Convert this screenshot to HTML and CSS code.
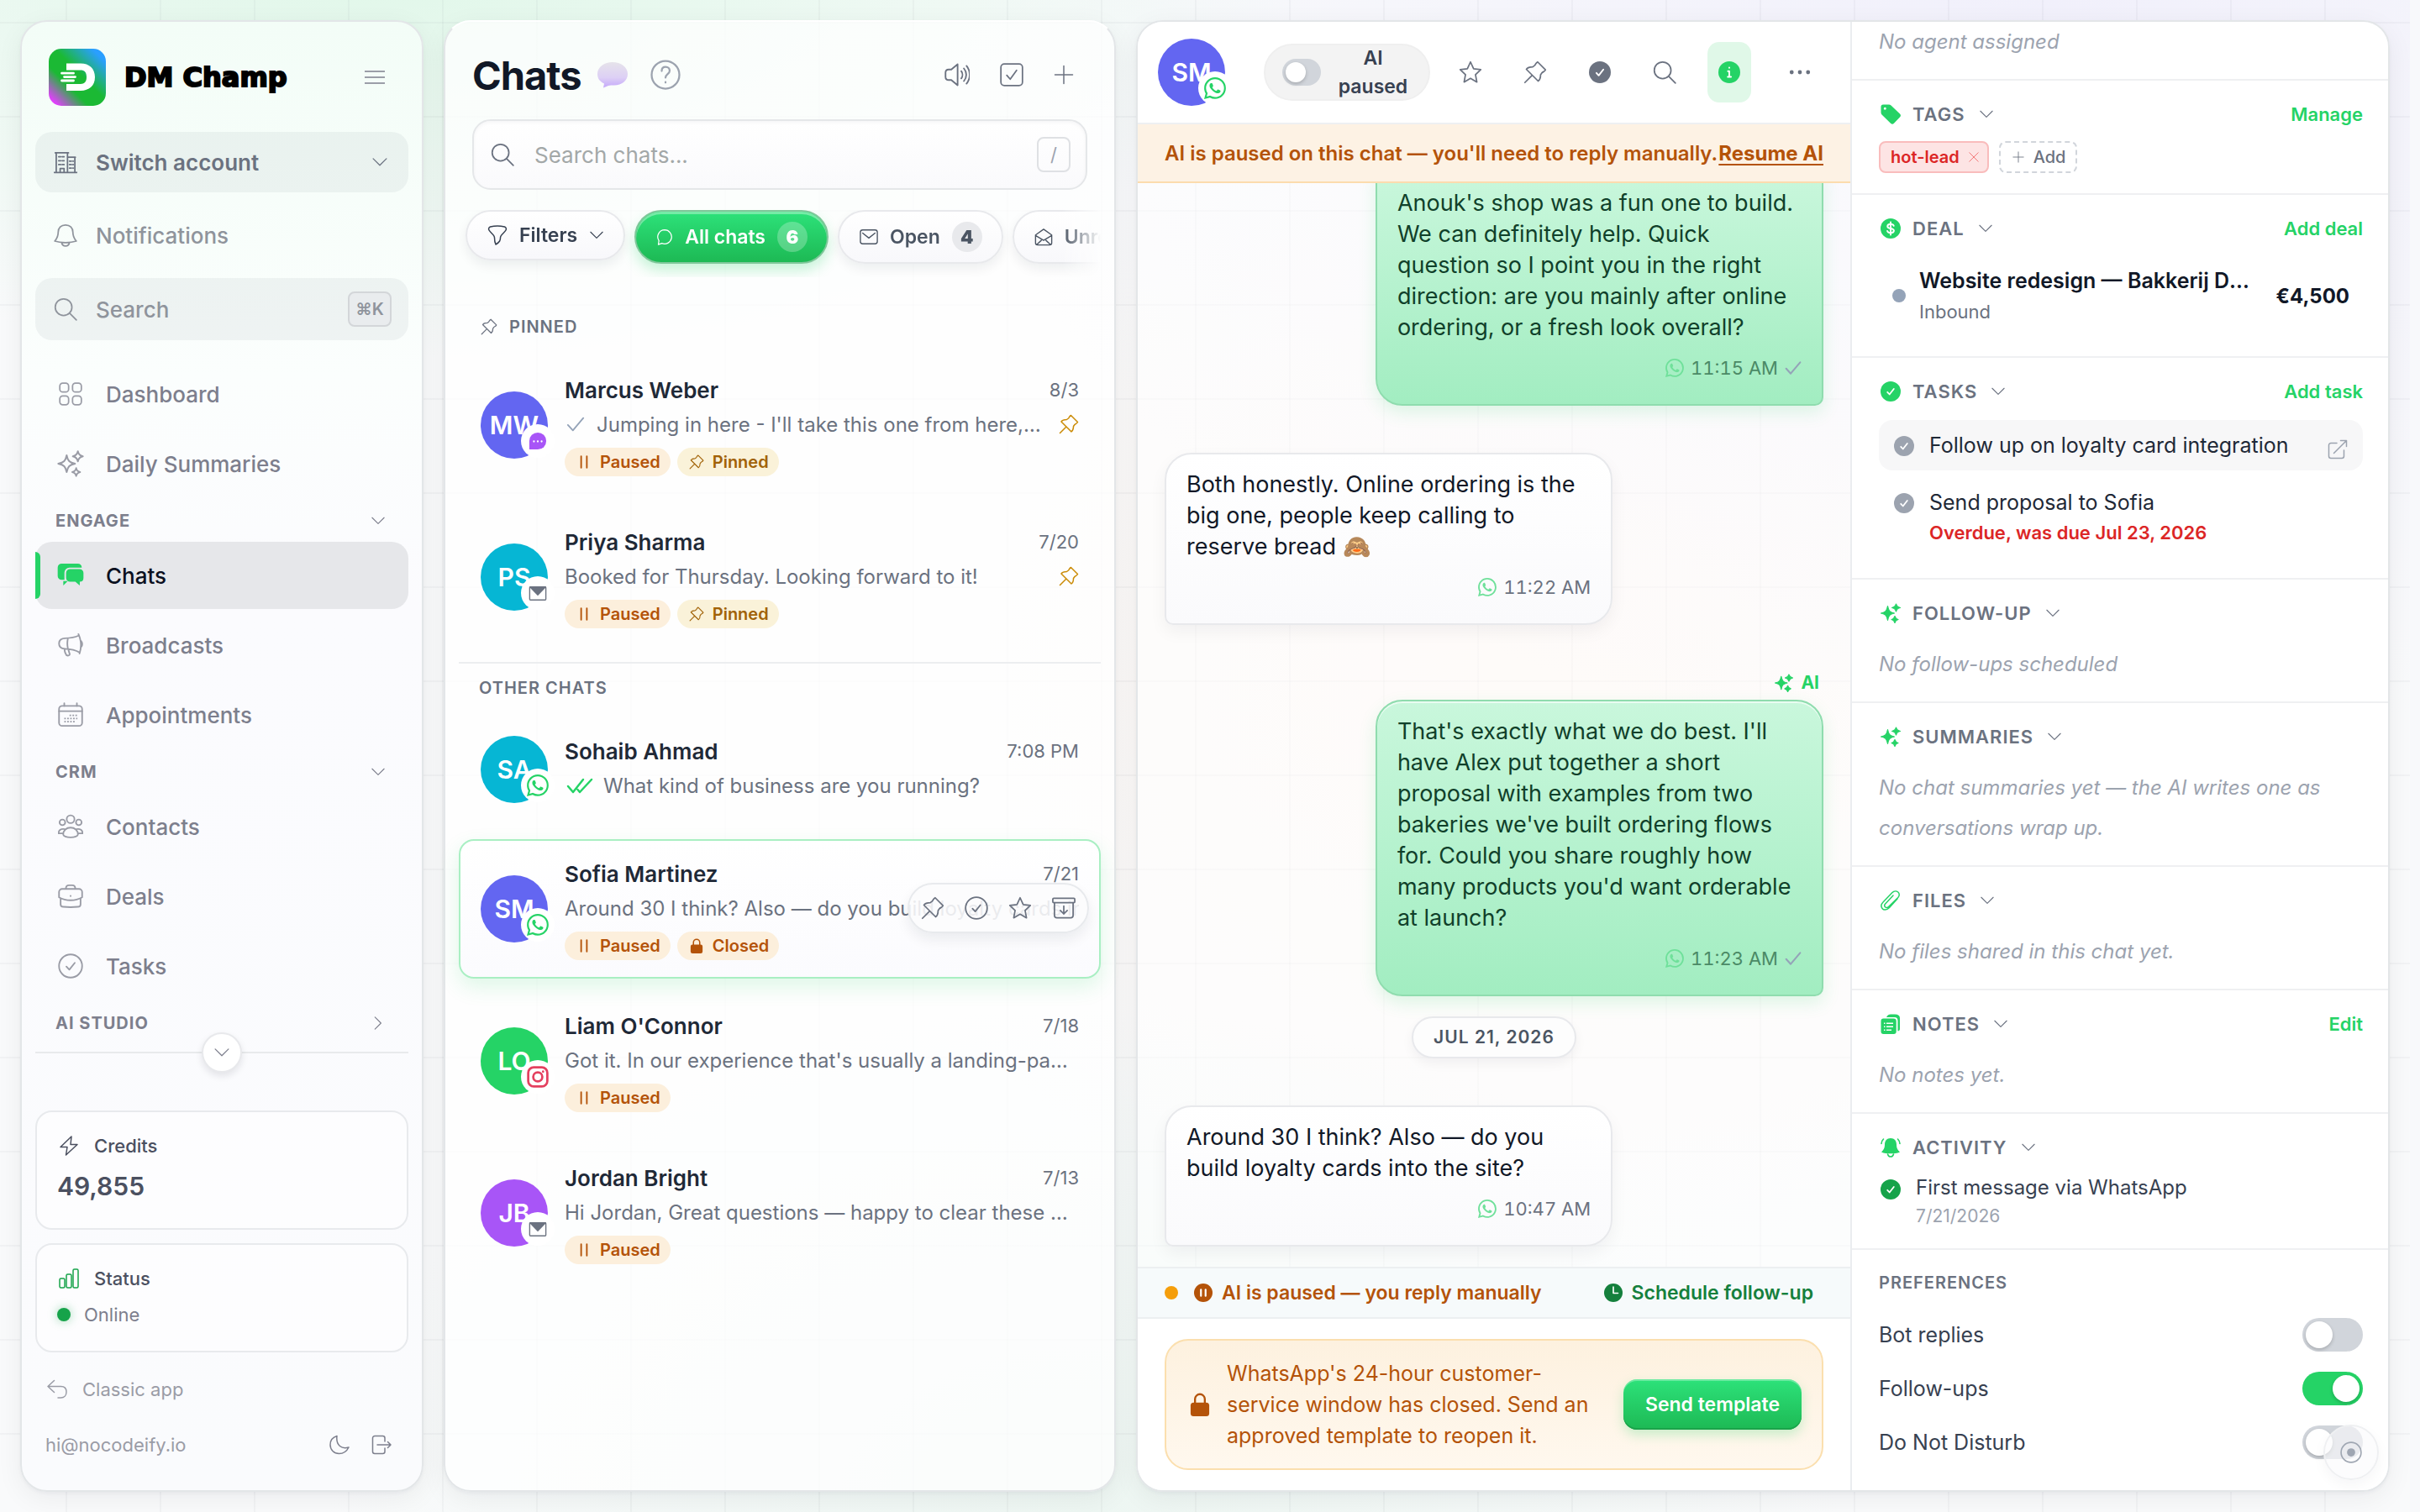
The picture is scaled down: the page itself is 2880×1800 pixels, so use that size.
FILE: index.html
```html
<!DOCTYPE html>
<html lang="en">
<head>
    <meta charset="UTF-8">
    <meta name="viewport" content="width=device-width, initial-scale=1.0">
    <title>Chats - DM Champ</title>
    <link rel="stylesheet" href="styles.css">
</head>
<body>
    <!-- Icon sprite -->
    <svg class="sprite" xmlns="http://www.w3.org/2000/svg">
        <symbol id="i-menu" viewBox="0 0 24 24"><path d="M0 5h24M0 12h24M0 19h24"/></symbol>
        <symbol id="i-down" viewBox="0 0 24 24"><path d="M2.500 7l9.500 9.500L21.500 7"/></symbol>
        <symbol id="i-right" viewBox="0 0 24 24"><path d="M7 2.500l9.500 9.500L7 21.500"/></symbol>
        <symbol id="i-building" viewBox="0 0 24 24"><path d="M.5 22.500h23M2.500 22V2.500M14 22V2.500M1.500 2.500h13.500M14 7h8M21.500 7v15M6.500 22v-3.500h4V22"/><path stroke-dasharray="2 1.500" d="M5 6.500h7M5 10.500h7M5 14.500h7M16 11h4M16 14.500h4M16 18h4"/></symbol>
        <symbol id="i-bell" viewBox="0 0 24 24"><path d="M12 1.500c-4.500 0-7.500 3-7.500 7.500 0 5-1.500 6.500-3.500 9 3.500 1.200 7 1.500 11 1.500s7.500-.3 11-1.500c-2-2.500-3.500-4-3.500-9 0-4.500-3-7.500-7.500-7.500zM8 19.500c.3 2 1.800 3.500 4 3.500s3.700-1.500 4-3.500"/></symbol>
        <symbol id="i-search" viewBox="0 0 24 24"><circle cx="10" cy="10" r="8.500"/><path d="M16.200 16.200L23 23"/></symbol>
        <symbol id="i-grid" viewBox="0 0 24 24"><rect x="1" y="1" width="9" height="9" rx="3"/><rect x="14" y="1" width="9" height="9" rx="3"/><rect x="1" y="14" width="9" height="9" rx="3"/><rect x="14" y="14" width="9" height="9" rx="3"/></symbol>
        <symbol id="i-stars" viewBox="0 0 24 24"><path d="M8.500 4.500c1 5 2.500 6.500 7.500 7.500-5 1-6.500 2.500-7.500 7.500-1-5-2.500-6.500-7.500-7.500 5-1 6.500-2.500 7.500-7.500zM18.500 1c.6 2.800 1.600 3.900 4.500 4.500-2.900.6-3.900 1.600-4.500 4.500-.6-2.900-1.600-3.900-4.500-4.500 2.900-.6 3.900-1.700 4.500-4.500zM17 16c.4 2.200 1.300 3 3.500 3.500-2.200.5-3.100 1.300-3.500 3.500-.4-2.200-1.300-3-3.500-3.500 2.200-.5 3.100-1.300 3.500-3.500z"/></symbol>
        <symbol id="i-stars-f" viewBox="0 0 24 24"><path stroke="currentColor" stroke-width="1.200" stroke-linejoin="round" d="M8.500 3.500c1.200 6 2.500 7.300 8 8.500-5.500 1.200-6.800 2.500-8 8.500-1.200-6-2.500-7.300-8-8.500 5.500-1.200 6.800-2.500 8-8.500zM18.500 1c.8 3 1.800 3.900 5 4.500-3.200.6-4.200 1.600-5 4.500-.8-2.900-1.800-3.900-5-4.500 3.200-.6 4.200-1.500 5-4.500zM17 15.500c.6 2.600 1.500 3.400 4 4-2.500.6-3.400 1.400-4 4-.6-2.600-1.500-3.400-4-4 2.500-.6 3.400-1.400 4-4z"/></symbol>
        <symbol id="i-chats" viewBox="0 0 24 24"><path d="M4 1.500h14.500a3.500 3.500 0 0 1 3.500 3.500H11a4.500 4.500 0 0 0-4.500 4.500v6.500H4a3.500 3.500 0 0 1-3.500-3.500V5A3.500 3.500 0 0 1 4 1.500zM5.500 17h4l-4 4z"/><path d="M11.500 6.300H20a3.500 3.500 0 0 1 3.500 3.500v4.400a3.500 3.500 0 0 1-3.300 3.500V21l-4-3.300h-4.700a3.500 3.500 0 0 1-3.500-3.500V9.800a3.500 3.500 0 0 1 3.500-3.500z"/></symbol>
        <symbol id="i-horn" viewBox="0 0 24 24"><path d="M19.500 3C16 4.700 12 5.300 6.500 5.500 3 5.700 1 7.700 1 10.500s2 4.800 5.500 5c5.500.2 10 1 14 3.500M19.500 1.500c2.500 5.500 3 12.500 1 18.500M22 8c1.300 1.500 1.500 4 .3 5.500M9.500 5.500c-.7 3-.7 7 0 10M6 15.500c.3 2.500.8 4.500 2 6 1.200.8 3 .5 3.200-.8L9.800 16"/></symbol>
        <symbol id="i-calendar" viewBox="0 0 24 24"><rect x="1" y="3.500" width="22" height="19" rx="3"/><path d="M1 8.500h22M6 1v2.500M18 1v2.500"/><path stroke-linecap="butt" stroke-dasharray="1.500 1.300" d="M11 12.500h7.500M6 15.500h12.500M6 18.500h10"/></symbol>
        <symbol id="i-people" viewBox="0 0 24 24"><circle cx="12" cy="5" r="3.700"/><circle cx="4.200" cy="8" r="2.700"/><circle cx="19.800" cy="8" r="2.700"/><path d="M5 19.500c0-4 3-6.500 7-6.500s7 2.500 7 6.500c0 1.500-3 2.800-7 2.800s-7-1.300-7-2.800zM6.500 14.500c-3.500-.8-6 1-6 4h4.500M17.500 14.500c3.500-.8 6 1 6 4H19"/></symbol>
        <symbol id="i-case" viewBox="0 0 24 24"><path d="M4 5h16a3 3 0 0 1 3 3v5c-3.500 2-7 2.800-11 2.800S4.500 15 1 13V8a3 3 0 0 1 3-3zM7.500 5c0-2 1-3.500 3-3.500h3c2 0 3 1.500 3 3.500M2.500 14v5.500c0 1.500 1 2.500 2.500 2.500 4.500.5 9.500.5 14 0 1.500 0 2.500-1 2.500-2.500V14M12 11.500v.3"/></symbol>
        <symbol id="i-check-o" viewBox="0 0 24 24"><circle cx="12" cy="12" r="11"/><path d="M8 12.500l2.800 3L16 9"/></symbol>
        <symbol id="i-bolt" viewBox="0 0 24 24"><path d="M15 1L2 13.500h8L8.500 23 22 10.500h-8z"/></symbol>
        <symbol id="i-bars" viewBox="0 0 24 24"><rect x="1" y="12" width="6" height="11" rx="1.500"/><rect x="9" y="7" width="6" height="16" rx="1.500"/><rect x="17" y="1" width="6" height="22" rx="1.500"/></symbol>
        <symbol id="i-undo" viewBox="0 0 24 24"><path d="M8.500 1.500L1 8.500l7.500 7M1 8.500h15.500c4 0 6.500 2.500 6.500 6.500s-2.500 7-6.500 7H13"/></symbol>
        <symbol id="i-moon" viewBox="0 0 24 24"><path d="M9 1.500C4 3 1 7 1 12c0 6 4.500 10.500 10.500 10.500 5 0 9-2.500 11.500-7.500C15 17.500 7.500 13 9 1.500z"/></symbol>
        <symbol id="i-logout" viewBox="0 0 24 24"><path d="M16 8V4a2.500 2.500 0 0 0-2.500-2.500H4A2.500 2.500 0 0 0 1.500 4v16A2.500 2.500 0 0 0 4 22.500h9.500A2.500 2.500 0 0 0 16 20v-4M7 12h16M19.500 8.500L23 12l-3.500 3.500"/></symbol>
        <symbol id="i-help" viewBox="0 0 24 24"><circle cx="12" cy="12" r="11"/><path d="M9 9c0-2 1.300-3.200 3.100-3.200S15.300 7 15.300 8.800c0 2.500-3.300 2.700-3.300 5.500M12 17.800v.4"/></symbol>
        <symbol id="i-volume" viewBox="0 0 24 24"><path d="M12.500 2L6.500 7H4C2 7 1 8.500 1 10v4c0 1.500 1 3 3 3h2.500l6 5zM16 8.500c1.500 2 1.500 5 0 7M18.500 6c3 3.500 3 8.500 0 12M21 3.500c4 5 4 12 0 17"/></symbol>
        <symbol id="i-checkbox" viewBox="0 0 24 24"><rect x="1" y="1" width="22" height="22" rx="3.500"/><path d="M7 12.500l3.500 4L17 7.500"/></symbol>
        <symbol id="i-plus" viewBox="0 0 24 24"><path d="M12 1.500v21M1.500 12h21"/></symbol>
        <symbol id="i-x" viewBox="0 0 24 24"><path d="M3 3l18 18M21 3L3 21"/></symbol>
        <symbol id="i-funnel" viewBox="0 0 24 24"><path d="M3.500 2C8 1 16 1 20.500 2c1.500.5 2.500 2 1.500 4-1.500 3-6.500 5.500-6.500 9 0 3-.5 5-5.500 8-1-2-1.500-4-1.500-8 0-3.500-5-6-6.500-9-1-2 0-3.500 1.500-4z"/></symbol>
        <symbol id="i-bubble" viewBox="0 0 24 24"><path d="M12 2a10 10 0 1 1-4 19.200L3 23l.8-5.500A10 10 0 0 1 12 2z"/></symbol>
        <symbol id="i-mail" viewBox="0 0 24 24"><rect x="1" y="3" width="22" height="18" rx="3"/><path d="M4 7l8 6.500L20 7"/></symbol>
        <symbol id="i-mail-open" viewBox="0 0 24 24"><path d="M1.500 9.500L12 2l10.500 7.500V20a2.500 2.500 0 0 1-2.500 2.500H4A2.500 2.500 0 0 1 1.500 20zM2 10.500l10 6 10-6M3 22l6-5.500M21 22l-6-5.500"/></symbol>
        <symbol id="i-mail-fill" viewBox="0 0 24 24"><rect x="1.500" y="4" width="21" height="17" rx="1"/><path fill="currentColor" d="M2 4h20L12 14.500z"/></symbol>
        <symbol id="i-pin" viewBox="0 0 24 24"><path d="M14.500 1.500L22.500 9.500c-1 2-2.500 2-3.500 3l-1.500 2c0 3-1 5.500-2.500 6.500L3 9c1-1.500 3.500-2.500 6.500-2.500l2-1.500c1-1 1-2.500 3-3.500zM8.500 15.500L1.500 22.500"/></symbol>
        <symbol id="i-star" viewBox="0 0 24 24"><path d="M12 1.500l3.200 7 7.300.9-5.400 5.100 1.400 7.500-6.500-3.700L5.500 22l1.400-7.500L1.500 9.400l7.300-.9z"/></symbol>
        <symbol id="i-archive" viewBox="0 0 24 24"><rect x=".8" y="2" width="22.400" height="4.500" rx="1"/><path d="M2.500 6.500v13A2.500 2.500 0 0 0 5 22h14a2.500 2.500 0 0 0 2.500-2.500v-13M12 10v8M8.500 14.500L12 18l3.500-3.500"/></symbol>
        <symbol id="i-tick" viewBox="0 0 24 24"><path d="M2 13l6.500 7L22 4"/></symbol>
        <symbol id="i-ticks" viewBox="0 0 32 24"><path d="M2 13l6 7L20 5M13.500 17l2.500 3L30 5"/></symbol>
        <symbol id="i-pause" viewBox="0 0 24 24"><path d="M7.500 3v18M16.500 3v18"/></symbol>
        <symbol id="i-lock" viewBox="0 0 24 24"><path fill="none" stroke="currentColor" stroke-width="2" d="M7 11V6.500a5 5 0 0 1 10 0V11"/><rect x="2.500" y="10" width="19" height="14" rx="3"/></symbol>
        <symbol id="i-dots" viewBox="0 0 24 24"><circle cx="3" cy="12" r="2.200"/><circle cx="12" cy="12" r="2.200"/><circle cx="21" cy="12" r="2.200"/></symbol>
        <symbol id="i-check-f" viewBox="0 0 24 24"><circle cx="12" cy="12" r="12"/><path fill="none" stroke="#fff" stroke-width="1.800" stroke-linecap="round" d="M8.200 12.800l2.500 2.700L15.800 9"/></symbol>
        <symbol id="i-info" viewBox="0 0 24 24"><circle cx="12" cy="12" r="12"/><path fill="none" stroke="#fff" stroke-width="1.800" stroke-linecap="round" d="M12 6.800v.4M10.500 10.800H12v6M10.300 17h3.600"/></symbol>
        <symbol id="i-pause-f" viewBox="0 0 24 24"><circle cx="12" cy="12" r="12"/><path stroke="#fff" stroke-width="2.400" stroke-linecap="round" d="M9 8v8M15 8v8"/></symbol>
        <symbol id="i-clock-f" viewBox="0 0 24 24"><circle cx="12" cy="12" r="12"/><path fill="none" stroke="#fff" stroke-width="1.800" d="M12 4.500V12.500h6"/></symbol>
        <symbol id="i-dollar" viewBox="0 0 24 24"><circle cx="12" cy="12" r="12"/><path fill="none" stroke="#fff" stroke-width="2" stroke-linecap="round" d="M12 4.500v15M15.700 8.800c-.5-1.300-1.800-2-3.700-2-2.200 0-3.700 1-3.700 2.600 0 3.500 7.600 1.700 7.600 5.200 0 1.600-1.600 2.600-3.900 2.600-2 0-3.400-.8-3.900-2.200"/></symbol>
        <symbol id="i-tag" viewBox="0 0 24 24"><path fill-rule="evenodd" d="M3 .5h7c1 0 1.800.3 2.500 1L23 11.500c1.300 1.300 1.300 2.700 0 4L16 22.800c-1.200 1.200-2.700 1.200-4 0L1.500 12.500c-.7-.7-1-1.500-1-2.500V3C.5 1.500 1.500.5 3 .5zM5.200 3.800a1.500 1.500 0 1 0 .1 3 1.500 1.500 0 0 0-.1-3z"/></symbol>
        <symbol id="i-external" viewBox="0 0 24 24"><path d="M11 4.500H4A2.500 2.500 0 0 0 1.500 7v13A2.500 2.500 0 0 0 4 22.500h13a2.500 2.500 0 0 0 2.500-2.500v-7M7.500 16.500L22.500 1.500M15.500 1.500h7v7"/></symbol>
        <symbol id="i-clip" viewBox="0 0 24 24"><path d="M20 10L10.500 20.500C7 24 3.500 23.500 2 21.500s-1.500-5 1-7.500L14 2.500c2-2 5-2 6.800-.5s2 4.500 0 6.500L9.500 19.500c-1.500 1.300-3 1.200-4 .2s-1-2.500.2-3.800L15 6"/></symbol>
        <symbol id="i-notes" viewBox="0 0 24 24"><path d="M7 4C8 1.500 10 .5 12 .5h5C21 .5 23 2 23 5v13c0 1.500-1 2.500-2.500 2.500V8A4 4 0 0 0 16.500 4z"/><path fill-rule="evenodd" d="M3.500 5.500h12.200A3 3 0 0 1 18.700 8.500V21a3 3 0 0 1-3 3H3.500a3 3 0 0 1-3-3V8.500a3 3 0 0 1 3-3zM4 10.500V12h1.500v-1.500zm3 0V12h8v-1.500zM4 14.500V16h1.500v-1.500zm3 0V16h8v-1.500zM4 18.500V20h1.500v-1.500zm3 0V20h6v-1.500z"/></symbol>
        <symbol id="i-bell-f" viewBox="0 0 24 24"><path d="M12 1C7.500 1 5 4 5 8.500c0 4.500-1.500 6.500-4 9C4 19 8 19.300 12 19.300S20 19 23 17.500c-2.500-2.500-4-4.500-4-9C19 4 16.500 1 12 1z"/><path fill="none" stroke="currentColor" stroke-width="1.600" stroke-linecap="round" d="M8.500 20c.5 2 1.700 3 3.500 3s3-1 3.500-3M3.500 2C2 3.500 1 5.500 1 7.500M20.500 2C22 3.500 23 5.500 23 7.500"/></symbol>
        <symbol id="i-messenger" viewBox="0 0 24 24"><path d="M12 1a11 11 0 0 1 0 22H1V12A11 11 0 0 1 12 1z"/><path fill="none" stroke="#fff" stroke-width="2.500" stroke-linecap="round" d="M7 12.500v.1M12 12.500v.1M17 12.500v.1"/></symbol>
        <symbol id="i-instagram" viewBox="0 0 24 24"><rect x="1.500" y="1.500" width="21" height="21" rx="6"/><circle cx="12" cy="12" r="5"/><path d="M17.800 6.200v.1"/></symbol>
        <symbol id="i-whatsapp" viewBox="0 0 16 16"><path d="M13.601 2.326A7.850 7.850 0 0 0 7.994 0C3.627 0 .068 3.558.064 7.926c0 1.399.366 2.760 1.057 3.965L0 16l4.204-1.102a7.900 7.900 0 0 0 3.790.965h.004c4.368 0 7.926-3.558 7.930-7.930A7.900 7.900 0 0 0 13.600 2.326zM7.994 14.521a6.600 6.600 0 0 1-3.356-.92l-.24-.144-2.494.654.666-2.433-.156-.251a6.560 6.560 0 0 1-1.007-3.505c0-3.626 2.957-6.584 6.591-6.584a6.560 6.560 0 0 1 4.660 1.931 6.560 6.560 0 0 1 1.928 4.660c-.004 3.639-2.961 6.592-6.592 6.592m3.615-4.934c-.197-.099-1.170-.578-1.353-.646-.182-.065-.315-.099-.445.099-.133.197-.513.646-.627.775-.114.133-.232.148-.43.050-.197-.1-.836-.308-1.592-.985-.59-.525-.985-1.175-1.103-1.372-.114-.198-.011-.304.088-.403.087-.088.197-.232.296-.346.1-.114.133-.198.198-.33.065-.134.034-.248-.015-.347-.05-.099-.445-1.076-.612-1.470-.16-.389-.323-.335-.445-.34-.114-.007-.247-.007-.38-.007a.73.73 0 0 0-.529.247c-.182.198-.691.677-.691 1.654s.71 1.916.81 2.049c.098.133 1.394 2.132 3.383 2.992.47.205.84.326 1.129.418.475.152.904.129 1.246.080.38-.058 1.171-.48 1.338-.943.164-.464.164-.86.114-.943-.049-.084-.182-.133-.38-.232"/></symbol>
        <symbol id="i-record" viewBox="0 0 24 24"><circle cx="12" cy="12" r="11"/><circle cx="12" cy="12" r="4.500" fill="currentColor" stroke="none"/></symbol>
    </svg>

    <div class="app">
        <!-- Sidebar -->
        <aside class="sidebar">
            <div class="brand">
                <svg class="brand-mark" viewBox="0 0 68 68">
                    <defs>
                        <linearGradient id="brandFill" x1="0" y1="1" x2="1" y2="0">
                            <stop offset="0.080" stop-color="#e040fb"/>
                            <stop offset="0.350" stop-color="#1bb934"/>
                            <stop offset="0.550" stop-color="#1bb934"/>
                            <stop offset="0.880" stop-color="#2a9fff"/>
                        </linearGradient>
                    </defs>
                    <rect width="68" height="68" rx="15" fill="url(#brandFill)"/>
                    <path fill="#fff" d="M21 17.500h17c10 0 17 6 17 16.300S48 50 38 50H21v-8h17c4.500 0 7-2.500 7-8.200s-2.500-8.200-7-8.200H21z"/>
                    <path stroke="#fff" stroke-width="2.800" stroke-linecap="round" d="M15.500 29.200h14M18.500 33.600h13M15.500 38h14"/>
                </svg>
                <span class="brand-name">DM Champ</span>
                <button class="icon-btn" aria-label="Toggle menu"><svg class="icon"><use href="#i-menu"/></svg></button>
            </div>
            <button class="side-box side-switch"><svg class="icon icon-28"><use href="#i-building"/></svg><span>Switch account</span><svg class="icon icon-20"><use href="#i-down"/></svg></button>
            <button class="side-box side-plain"><svg class="icon icon-28"><use href="#i-bell"/></svg><span>Notifications</span></button>
            <button class="side-box side-search"><svg class="icon icon-28"><use href="#i-search"/></svg><span>Search</span><kbd>⌘K</kbd></button>

            <nav class="nav">
                <a href="#"><svg class="icon icon-28"><use href="#i-grid"/></svg>Dashboard</a>
                <a href="#"><svg class="icon icon-32"><use href="#i-stars"/></svg>Daily Summaries</a>
                <button class="nav-group">ENGAGE<svg class="icon icon-18"><use href="#i-down"/></svg></button>
                <a href="#" class="active"><svg class="icon icon-32 solid"><use href="#i-chats"/></svg>Chats</a>
                <a href="#"><svg class="icon icon-30"><use href="#i-horn"/></svg>Broadcasts</a>
                <a href="#"><svg class="icon icon-30"><use href="#i-calendar"/></svg>Appointments</a>
                <button class="nav-group">CRM<svg class="icon icon-18"><use href="#i-down"/></svg></button>
                <a href="#"><svg class="icon icon-30"><use href="#i-people"/></svg>Contacts</a>
                <a href="#"><svg class="icon icon-30"><use href="#i-case"/></svg>Deals</a>
                <a href="#"><svg class="icon icon-30"><use href="#i-check-o"/></svg>Tasks</a>
                <button class="nav-group">AI STUDIO<svg class="icon icon-18"><use href="#i-right"/></svg></button>
            </nav>
            <div class="nav-more"><button aria-label="Show more"><svg class="icon icon-20"><use href="#i-down"/></svg></button></div>

            <div class="side-bottom">
                <div class="card credits">
                    <div class="card-title"><svg class="icon"><use href="#i-bolt"/></svg>Credits</div>
                    <div class="credits-value">49,855</div>
                </div>
                <div class="card status">
                    <div class="card-title"><svg class="icon green-dark"><use href="#i-bars"/></svg>Status</div>
                    <div class="online"><i class="online-dot"></i>Online</div>
                </div>
                <a href="#" class="classic"><svg class="icon"><use href="#i-undo"/></svg>Classic app</a>
                <div class="account">
                    <span>hi@nocodeify.io</span>
                    <button class="icon-btn" aria-label="Dark mode"><svg class="icon"><use href="#i-moon"/></svg></button>
                    <button class="icon-btn" aria-label="Log out"><svg class="icon"><use href="#i-logout"/></svg></button>
                </div>
            </div>
        </aside>

        <!-- Chat list -->
        <section class="chats">
            <header class="chats-head">
                <h1>Chats</h1>
                <svg class="bubble3d" viewBox="0 0 38 32">
                    <defs>
                        <linearGradient id="bubbleFill" x1="0" y1="0" x2="0" y2="1">
                            <stop offset="0" stop-color="#e6e3ea"/>
                            <stop offset="0.600" stop-color="#ddd0f5"/>
                            <stop offset="1" stop-color="#c4a8fa"/>
                        </linearGradient>
                    </defs>
                    <path fill="url(#bubbleFill)" d="M19 1c10 0 18 6 18 14s-7 13.500-16 13.500c-3 0-5 0-7 .5l-6 2.500 1-5C3.500 24 1 20 1 15 1 7 9 1 19 1z"/>
                </svg>
                <button class="icon-btn help" aria-label="Help"><svg class="icon icon-36"><use href="#i-help"/></svg></button>
                <div class="chats-tools">
                    <button class="icon-btn" aria-label="Sound"><svg class="icon icon-30"><use href="#i-volume"/></svg></button>
                    <button class="icon-btn" aria-label="Select chats"><svg class="icon icon-28"><use href="#i-checkbox"/></svg></button>
                    <button class="icon-btn" aria-label="New chat"><svg class="icon"><use href="#i-plus"/></svg></button>
                </div>
            </header>
            <label class="search">
                <svg class="icon icon-28"><use href="#i-search"/></svg>
                <input type="text" placeholder="Search chats..." aria-label="Search chats">
                <kbd>/</kbd>
            </label>
            <div class="pills">
                <button class="pill pill-filter"><svg class="icon"><use href="#i-funnel"/></svg>Filters<svg class="icon icon-18"><use href="#i-down"/></svg></button>
                <button class="pill pill-on"><svg class="icon icon-20"><use href="#i-bubble"/></svg>All chats<b>6</b></button>
                <button class="pill"><svg class="icon icon-22"><use href="#i-mail"/></svg>Open<b>4</b></button>
                <button class="pill"><svg class="icon icon-22"><use href="#i-mail-open"/></svg>Unread<b>2</b></button>
            </div>

            <div class="list">
                <h2 class="list-label"><svg class="icon icon-20"><use href="#i-pin"/></svg>PINNED</h2>
                <article class="chat">
                    <div class="avatar indigo">MW<span class="badge purple"><svg class="icon icon-22 solid"><use href="#i-messenger"/></svg></span></div>
                    <div class="chat-body">
                        <div class="chat-top"><h3>Marcus Weber</h3><time>8/3</time></div>
                        <div class="chat-text"><svg class="icon icon-22 tick"><use href="#i-tick"/></svg><p>Jumping in here - I'll take this one from here, thanks</p><svg class="icon pin-mark"><use href="#i-pin"/></svg></div>
                        <div class="chips"><span class="chip"><svg class="icon icon-18 bold"><use href="#i-pause"/></svg>Paused</span><span class="chip chip-pin"><svg class="icon icon-18"><use href="#i-pin"/></svg>Pinned</span></div>
                    </div>
                </article>
                <article class="chat">
                    <div class="avatar cyan">PS<span class="badge gray"><svg class="icon icon-22"><use href="#i-mail-fill"/></svg></span></div>
                    <div class="chat-body">
                        <div class="chat-top"><h3>Priya Sharma</h3><time>7/20</time></div>
                        <div class="chat-text"><p>Booked for Thursday. Looking forward to it!</p><svg class="icon pin-mark"><use href="#i-pin"/></svg></div>
                        <div class="chips"><span class="chip"><svg class="icon icon-18 bold"><use href="#i-pause"/></svg>Paused</span><span class="chip chip-pin"><svg class="icon icon-18"><use href="#i-pin"/></svg>Pinned</span></div>
                    </div>
                </article>
                <h2 class="list-label list-other">OTHER CHATS</h2>
                <article class="chat">
                    <div class="avatar cyan">SA<span class="badge wa"><svg class="icon icon-26 solid"><use href="#i-whatsapp"/></svg></span></div>
                    <div class="chat-body">
                        <div class="chat-top"><h3>Sohaib Ahmad</h3><time>7:08 PM</time></div>
                        <div class="chat-text"><svg class="icon ticks"><use href="#i-ticks"/></svg><p>What kind of business are you running?</p></div>
                    </div>
                </article>
                <article class="chat selected">
                    <div class="avatar indigo">SM<span class="badge wa"><svg class="icon icon-26 solid"><use href="#i-whatsapp"/></svg></span></div>
                    <div class="chat-body">
                        <div class="chat-top"><h3>Sofia Martinez</h3><time>7/21</time></div>
                        <div class="chat-text"><p class="cut">Around 30 I think? Also — do you build loyalty cards into the site?</p></div>
                        <div class="chips"><span class="chip"><svg class="icon icon-18 bold"><use href="#i-pause"/></svg>Paused</span><span class="chip"><svg class="icon icon-18 solid"><use href="#i-lock"/></svg>Closed</span></div>
                    </div>
                    <div class="hover-actions">
                        <button class="icon-btn" aria-label="Pin"><svg class="icon icon-28"><use href="#i-pin"/></svg></button>
                        <button class="icon-btn" aria-label="Close chat"><svg class="icon icon-28"><use href="#i-check-o"/></svg></button>
                        <button class="icon-btn" aria-label="Star"><svg class="icon icon-28"><use href="#i-star"/></svg></button>
                        <button class="icon-btn" aria-label="Archive"><svg class="icon icon-28"><use href="#i-archive"/></svg></button>
                    </div>
                </article>
                <article class="chat">
                    <div class="avatar green">LO<span class="badge red"><svg class="icon icon-26 bold"><use href="#i-instagram"/></svg></span></div>
                    <div class="chat-body">
                        <div class="chat-top"><h3>Liam O'Connor</h3><time>7/18</time></div>
                        <div class="chat-text"><p>Got it. In our experience that's usually a landing-page problem</p></div>
                        <div class="chips"><span class="chip"><svg class="icon icon-18 bold"><use href="#i-pause"/></svg>Paused</span></div>
                    </div>
                </article>
                <article class="chat">
                    <div class="avatar violet">JB<span class="badge gray"><svg class="icon icon-22"><use href="#i-mail-fill"/></svg></span></div>
                    <div class="chat-body">
                        <div class="chat-top"><h3>Jordan Bright</h3><time>7/13</time></div>
                        <div class="chat-text"><p>Hi Jordan, Great questions — happy to clear these up for you</p></div>
                        <div class="chips"><span class="chip"><svg class="icon icon-18 bold"><use href="#i-pause"/></svg>Paused</span></div>
                    </div>
                </article>
            </div>
        </section>

        <!-- Conversation and contact details -->
        <main class="window">
            <section class="conversation">
                <header class="conv-head">
                    <div class="avatar indigo">SM<span class="badge wa"><svg class="icon icon-26 solid"><use href="#i-whatsapp"/></svg></span></div>
                    <label class="ai-switch"><input type="checkbox" class="toggle toggle-small"><span>AI paused</span></label>
                    <div class="conv-tools">
                        <button class="tool" aria-label="Star"><svg class="icon icon-28"><use href="#i-star"/></svg></button>
                        <button class="tool" aria-label="Pin"><svg class="icon icon-28"><use href="#i-pin"/></svg></button>
                        <button class="tool" aria-label="Close chat"><svg class="icon icon-26 solid"><use href="#i-check-f"/></svg></button>
                        <button class="tool" aria-label="Search"><svg class="icon icon-28"><use href="#i-search"/></svg></button>
                        <button class="tool tool-on" aria-label="Details"><svg class="icon icon-26 solid"><use href="#i-info"/></svg></button>
                        <button class="tool tool-more" aria-label="More"><svg class="icon icon-26 solid"><use href="#i-dots"/></svg></button>
                    </div>
                </header>
                <div class="banner"><span>AI is paused on this chat — you'll need to reply manually.</span><a href="#">Resume AI</a></div>

                <div class="messages">
                    <div class="msg out continued">
                        <p>Anouk's shop was a fun one to build. We can definitely help. Quick question so I point you in the right direction: are you mainly after online ordering, or a fresh look overall?</p>
                        <div class="meta"><svg class="icon icon-22 solid"><use href="#i-whatsapp"/></svg><time>11:15 AM</time><svg class="icon icon-20 sent"><use href="#i-tick"/></svg></div>
                    </div>
                    <div class="msg in">
                        <p>Both honestly. Online ordering is the big one, people keep calling to reserve bread 🙈</p>
                        <div class="meta"><svg class="icon icon-22 solid"><use href="#i-whatsapp"/></svg><time>11:22 AM</time></div>
                    </div>
                    <div class="ai-label"><svg class="icon icon-22 solid"><use href="#i-stars-f"/></svg>AI</div>
                    <div class="msg out">
                        <p>That's exactly what we do best. I'll have Alex put together a short proposal with examples from two bakeries we've built ordering flows for. Could you share roughly how many products you'd want orderable at launch?</p>
                        <div class="meta"><svg class="icon icon-22 solid"><use href="#i-whatsapp"/></svg><time>11:23 AM</time><svg class="icon icon-20 sent"><use href="#i-tick"/></svg></div>
                    </div>
                    <div class="day">JUL 21, 2026</div>
                    <div class="msg in">
                        <p>Around 30 I think? Also — do you build loyalty cards into the site?</p>
                        <div class="meta"><svg class="icon icon-22 solid"><use href="#i-whatsapp"/></svg><time>10:47 AM</time></div>
                    </div>
                </div>

                <div class="strip">
                    <i class="strip-dot"></i>
                    <svg class="icon icon-22 solid"><use href="#i-pause-f"/></svg>
                    <span>AI is paused — you reply manually</span>
                    <button class="schedule"><svg class="icon icon-22 solid"><use href="#i-clock-f"/></svg>Schedule follow-up</button>
                </div>
                <div class="composer">
                    <div class="closed-box">
                        <svg class="icon icon-28 solid"><use href="#i-lock"/></svg>
                        <p>WhatsApp's 24-hour customer-service window has closed. Send an approved template to reopen it.</p>
                        <button class="send">Send template</button>
                    </div>
                </div>
            </section>

            <aside class="details">
                <section class="block block-agent"><p class="empty">No agent assigned</p></section>
                <section class="block">
                    <header><svg class="icon solid"><use href="#i-tag"/></svg><h4>TAGS</h4><svg class="icon icon-18 fold"><use href="#i-down"/></svg><button class="link-btn">Manage</button></header>
                    <div class="tags"><span class="tag">hot-lead<svg class="icon icon-14"><use href="#i-x"/></svg></span><button class="tag-add"><svg class="icon icon-14"><use href="#i-plus"/></svg>Add</button></div>
                </section>
                <section class="block">
                    <header><svg class="icon solid"><use href="#i-dollar"/></svg><h4>DEAL</h4><svg class="icon icon-18 fold"><use href="#i-down"/></svg><button class="link-btn">Add deal</button></header>
                    <div class="deal">
                        <i class="deal-dot"></i>
                        <div class="deal-info"><strong>Website redesign — Bakkerij De Vries</strong><span>Inbound</span></div>
                        <b>€4,500</b>
                    </div>
                </section>
                <section class="block block-tasks">
                    <header><svg class="icon solid"><use href="#i-check-f"/></svg><h4>TASKS</h4><svg class="icon icon-18 fold"><use href="#i-down"/></svg><button class="link-btn">Add task</button></header>
                    <div class="task task-hover"><svg class="icon solid"><use href="#i-check-f"/></svg><div>Follow up on loyalty card integration</div><svg class="icon open-mark"><use href="#i-external"/></svg></div>
                    <div class="task"><svg class="icon solid"><use href="#i-check-f"/></svg><div>Send proposal to Sofia<em>Overdue, was due Jul 23, 2026</em></div></div>
                </section>
                <section class="block">
                    <header><svg class="icon solid"><use href="#i-stars-f"/></svg><h4>FOLLOW-UP</h4><svg class="icon icon-18 fold"><use href="#i-down"/></svg></header>
                    <p class="empty">No follow-ups scheduled</p>
                </section>
                <section class="block">
                    <header><svg class="icon solid"><use href="#i-stars-f"/></svg><h4>SUMMARIES</h4><svg class="icon icon-18 fold"><use href="#i-down"/></svg></header>
                    <p class="empty">No chat summaries yet — the AI writes one as conversations wrap up.</p>
                </section>
                <section class="block">
                    <header><svg class="icon"><use href="#i-clip"/></svg><h4>FILES</h4><svg class="icon icon-18 fold"><use href="#i-down"/></svg></header>
                    <p class="empty">No files shared in this chat yet.</p>
                </section>
                <section class="block">
                    <header><svg class="icon solid"><use href="#i-notes"/></svg><h4>NOTES</h4><svg class="icon icon-18 fold"><use href="#i-down"/></svg><button class="link-btn">Edit</button></header>
                    <p class="empty">No notes yet.</p>
                </section>
                <section class="block">
                    <header><svg class="icon solid"><use href="#i-bell-f"/></svg><h4>ACTIVITY</h4><svg class="icon icon-18 fold"><use href="#i-down"/></svg></header>
                    <div class="activity"><svg class="icon solid"><use href="#i-check-f"/></svg><div>First message via WhatsApp<time>7/21/2026</time></div></div>
                </section>
                <section class="prefs">
                    <h5>PREFERENCES</h5>
                    <label>Bot replies<input type="checkbox" class="toggle"></label>
                    <label>Follow-ups<input type="checkbox" class="toggle" checked></label>
                    <label>Do Not Disturb<input type="checkbox" class="toggle"></label>
                </section>
            </aside>
        </main>
    </div>
    <button class="float-btn" aria-label="Record"><svg class="icon icon-26"><use href="#i-record"/></svg></button>
</body>
</html>
```
FILE: styles.css
```css
* {
    box-sizing: border-box;
}
body {
    margin: 0;
    font-family: Inter, "Liberation Sans", sans-serif;
    font-size: 25px;
    color: #1f2937;
    background-color: #f8f9fb;
}
h1, h2, h3, h4, h5, p {
    margin: 0;
}
button {
    font: inherit;
    color: inherit;
    background: none;
    border: none;
    padding: 0;
    cursor: pointer;
}
a {
    color: inherit;
    text-decoration: none;
}
kbd {
    font-family: inherit;
}
.sprite {
    display: none;
}

/* Icons */
.icon {
    width: 24px;
    height: 24px;
    flex: none;
    display: block;
    fill: none;
    stroke: currentColor;
    stroke-width: 1.5;
    stroke-linecap: round;
    stroke-linejoin: round;
    overflow: visible;
}
.icon-14 { width: 14px; height: 14px; }
.icon-18 { width: 18px; height: 18px; }
.icon-20 { width: 20px; height: 20px; }
.icon-22 { width: 22px; height: 22px; }
.icon-26 { width: 26px; height: 26px; }
.icon-28 { width: 28px; height: 28px; }
.icon-30 { width: 30px; height: 30px; }
.icon-32 { width: 32px; height: 32px; }
.icon-36 { width: 36px; height: 36px; }
.solid {
    fill: currentColor;
    stroke: none;
}
.bold {
    stroke-width: 2.5;
}
.icon-btn {
    display: flex;
}

/* Page */
.app {
    position: relative;
    display: grid;
    grid-template-columns: 480px 800px minmax(0, 1fr);
    gap: 24px;
    height: 100vh;
    margin-right: 12px;
    padding: 24px;
    background:
        linear-gradient(rgba(15, 23, 42, 0.03) 2px, transparent 2px) 0 26px / 112px 112px,
        linear-gradient(90deg, rgba(15, 23, 42, 0.03) 2px, transparent 2px) 78px 0 / 112px 112px,
        radial-gradient(ellipse 1100px 500px at 16% -4%, #dff7e8, transparent),
        radial-gradient(ellipse 1300px 900px at 85% 0, #f1f0fb, transparent),
        radial-gradient(ellipse 900px 600px at 45% 100%, #edf6f2, transparent),
        radial-gradient(ellipse 900px 700px at 65% 45%, #fdf6f2, transparent),
        #f9fafb;
}
.sidebar, .chats, .window {
    min-height: 0;
    border: 2px solid #e3e6e8;
    border-radius: 32px;
    box-shadow: 0 8px 32px rgba(15, 23, 42, 0.06), 0 2px 4px rgba(15, 23, 42, 0.04);
}

/* Sidebar */
.sidebar {
    display: flex;
    flex-direction: column;
    padding: 32px 16px 24px;
    background: linear-gradient(#f3fdf7, #fbfefd 24%, #fbfbfe 40%, #fafbfd);
    color: #7d7f8d;
}
.brand {
    display: flex;
    align-items: center;
    padding: 0 28px 0 16px;
    margin-bottom: 31px;
}
.brand-mark {
    width: 68px;
    height: 68px;
}
.brand-name {
    flex: 1;
    margin-left: 22px;
    font-family: "DejaVu Sans", sans-serif;
    font-size: 32px;
    font-weight: 700;
    color: #000;
    -webkit-text-stroke: 2px #000;
}
.side-box {
    display: flex;
    align-items: center;
    gap: 22px;
    height: 74px;
    padding: 0 24px 0 22px;
    margin-bottom: 14px;
    border-radius: 20px;
    font-size: 26px;
    font-weight: 500;
    text-align: left;
    color: #8f949c;
}
.side-box span {
    flex: 1;
}
.side-switch, .side-search {
    background: rgba(107, 114, 128, 0.08);
}
.side-switch {
    height: 72px;
    font-weight: 600;
    color: #6b7280;
}
.side-search {
    padding-right: 20px;
    margin-bottom: 24px;
}
.side-search kbd {
    width: 52px;
    height: 42px;
    border: 2px solid #d3d6d9;
    border-radius: 8px;
    background: #e9ecee;
    font-size: 20px;
    font-weight: 600;
    line-height: 38px;
    text-align: center;
}
.nav {
    display: flex;
    flex-direction: column;
}
.nav a {
    position: relative;
    display: flex;
    align-items: center;
    height: 80px;
    margin-bottom: 3px;
    border-radius: 20px;
    font-size: 26px;
    font-weight: 500;
}
.nav a .icon {
    margin: 0 27px;
    color: #9a9ca6;
}
.nav a .icon-32 {
    margin: 0 26px;
}
.nav a .icon-28 {
    margin: 0 28px;
}
.nav .active {
    background: #e6e7ea;
    color: #0b1020;
}
.nav .active .icon {
    color: #25d366;
}
.nav .active::before {
    content: "";
    position: absolute;
    left: 0;
    top: 12px;
    bottom: 12px;
    width: 6px;
    border-radius: 0 6px 6px 0;
    background: #25d366;
}
.nav-group {
    display: flex;
    align-items: center;
    justify-content: space-between;
    height: 50px;
    padding: 0 27px 0 24px;
    font-size: 20px;
    font-weight: 700;
    letter-spacing: 1px;
}
.nav-more {
    display: flex;
    justify-content: center;
    height: 2px;
    margin-top: 9px;
    background: #e8eaec;
}
.nav-more button {
    display: flex;
    align-items: center;
    justify-content: center;
    flex: none;
    width: 48px;
    height: 48px;
    margin-top: -23px;
    border: 2px solid #e8e9ec;
    border-radius: 50%;
    background: #fff;
    box-shadow: 0 4px 8px rgba(15, 23, 42, 0.1);
}
.side-bottom {
    margin-top: auto;
}
.card {
    padding: 24px;
    border: 2px solid #e8eaed;
    border-radius: 20px;
    background: rgba(255, 255, 255, 0.5);
}
.card-title {
    display: flex;
    align-items: center;
    gap: 18px;
    padding-left: 2px;
    font-size: 22px;
    font-weight: 500;
    line-height: 32px;
    color: #4b5060;
}
.green-dark {
    color: #16a34a;
}
.credits {
    height: 142px;
    margin-bottom: 16px;
}
.credits-value {
    margin-top: 10px;
    font-size: 30px;
    font-weight: 600;
    line-height: 44px;
    color: #4b5060;
}
.status {
    height: 130px;
}
.online {
    display: flex;
    align-items: center;
    gap: 16px;
    margin-top: 11px;
    font-size: 22px;
    line-height: 32px;
}
.online-dot {
    width: 16px;
    height: 16px;
    border-radius: 50%;
    background: #16a34a;
    box-shadow: 0 0 12px rgba(22, 163, 74, 0.4);
}
.classic {
    display: flex;
    align-items: center;
    gap: 18px;
    height: 68px;
    margin: 10px 0 2px 14px;
    font-size: 22px;
    color: #9a9ca6;
}
.account {
    display: flex;
    align-items: center;
    gap: 26px;
    height: 60px;
    padding: 0 20px 0 12px;
    font-size: 22px;
}
.account span {
    flex: 1;
    color: #9a9ca6;
}

/* Chat list */
.chats {
    display: flex;
    flex-direction: column;
    min-width: 0;
    padding: 24px 16px;
    background: rgba(255, 255, 255, 0.75);
    border-top-color: #fff;
}
.chats-head {
    display: flex;
    align-items: center;
    height: 78px;
    padding: 0 32px 0 16px;
    margin-bottom: 14px;
    color: #6b7280;
}
.chats-head h1 {
    font-size: 47px;
    font-weight: 700;
    letter-spacing: -1px;
    color: #111827;
}
.bubble3d {
    width: 38px;
    height: 32px;
    margin: 0 26px 0 18px;
}
.help {
    color: #9ca3af;
}
.chats-tools {
    display: flex;
    align-items: center;
    gap: 36px;
    margin-left: auto;
}
.search {
    display: flex;
    align-items: center;
    height: 84px;
    margin: 0 16px 24px;
    padding: 0 18px 0 20px;
    border: 2px solid #e5e7e9;
    border-radius: 22px;
    background: linear-gradient(#fff, #fafafc);
    box-shadow: inset 0 2px 4px rgba(15, 23, 42, 0.04);
    color: #6b7280;
}
.search input {
    flex: 1;
    min-width: 0;
    margin-left: 24px;
    padding: 0;
    border: none;
    outline: none;
    background: none;
    font: inherit;
    font-size: 26px;
}
.search input::placeholder {
    color: #a3a8a8;
}
.search kbd {
    width: 40px;
    height: 42px;
    border: 2px solid #dfe1e4;
    border-radius: 8px;
    font-size: 22px;
    line-height: 38px;
    text-align: center;
    color: #9ca3af;
}
.pills {
    display: flex;
    flex: none;
    gap: 11px;
    height: 80px;
    padding-left: 8px;
    overflow: hidden;
    -webkit-mask-image: linear-gradient(90deg, #000 94%, transparent);
    mask-image: linear-gradient(90deg, #000 94%, transparent);
}
.pill {
    display: flex;
    align-items: center;
    flex: none;
    gap: 14px;
    height: 64px;
    padding: 0 23px 0 24px;
    border: 2px solid #e8e9ec;
    border-radius: 32px;
    background: linear-gradient(#fff, #f8f8fb);
    box-shadow: 0 6px 14px rgba(15, 23, 42, 0.07);
    font-size: 23px;
    font-weight: 600;
    color: #4b5563;
}
.pill b {
    width: 36px;
    height: 36px;
    border-radius: 50%;
    background: #e8e9ec;
    font-size: 22px;
    line-height: 36px;
    text-align: center;
}
.pill-filter {
    height: 60px;
    color: #374151;
}
.pill-on {
    border-color: #7fc79a;
    background: linear-gradient(#2de27a, #1db954);
    box-shadow: 0 8px 16px rgba(37, 211, 102, 0.25), inset 0 3px 0 rgba(255, 255, 255, 0.35);
    color: #fff;
}
.pill-on b {
    background: rgba(255, 255, 255, 0.25);
}
.list {
    margin-top: 39px;
}
.list-label {
    display: flex;
    align-items: center;
    gap: 14px;
    height: 40px;
    margin: 0 0 14px 26px;
    font-size: 20px;
    font-weight: 600;
    letter-spacing: 1px;
    color: #6b7280;
}
.list-other {
    height: 60px;
    margin: 18px 0 0;
    padding-left: 24px;
    border-top: 2px solid #eceef0;
}
.chat {
    position: relative;
    display: flex;
    align-items: center;
    gap: 20px;
    min-height: 136px;
    margin-bottom: 15px;
    padding: 20px 24px;
    border: 2px solid transparent;
    border-radius: 18px;
}
.selected {
    border-color: #a9efc3;
    background: linear-gradient(#fff, #fbfbfe);
    box-shadow: 0 10px 24px rgba(37, 211, 102, 0.15);
}
.avatar {
    position: relative;
    flex: none;
    width: 80px;
    height: 80px;
    border-radius: 50%;
    font-size: 30px;
    font-weight: 600;
    line-height: 80px;
    text-align: center;
    color: #fff;
}
.indigo { background: #6366f1; }
.cyan { background: #06b6d4; }
.green { background: #25d366; }
.violet { background: #a855f7; }
.badge {
    position: absolute;
    right: -8px;
    bottom: 1px;
    display: flex;
    align-items: center;
    justify-content: center;
    width: 40px;
    height: 40px;
    border-radius: 50%;
    background: #fff;
}
.purple { color: #a855f7; }
.gray { color: #6b7280; }
.wa { color: #25d366; }
.red { color: #e4405f; }
.chat-body {
    flex: 1;
    min-width: 0;
}
.chat-top {
    display: flex;
    align-items: center;
    justify-content: space-between;
    height: 38px;
}
.chat-top h3 {
    font-size: 26px;
    font-weight: 600;
}
.chat-top time {
    font-size: 22px;
    color: #6b7280;
}
.chat-text {
    display: flex;
    align-items: center;
    height: 44px;
    font-size: 24px;
    color: #6b7280;
}
.chat-text p {
    flex: 1;
    min-width: 0;
    overflow: hidden;
    white-space: nowrap;
    text-overflow: ellipsis;
}
.chat-text .cut {
    text-overflow: clip;
}
.tick {
    margin: 0 14px 0 2px;
    stroke-width: 2;
    color: #94a3b8;
}
.ticks {
    width: 32px;
    margin: 0 12px 0 2px;
    stroke-width: 2.5;
    color: #25d366;
}
.pin-mark {
    margin-left: 20px;
    color: #ca8a04;
}
.chips {
    display: flex;
    gap: 8px;
    margin-top: 6px;
}
.chip {
    display: flex;
    align-items: center;
    gap: 10px;
    height: 34px;
    padding: 0 12px 0 14px;
    border-radius: 17px;
    background: #fcefdc;
    font-size: 20px;
    font-weight: 600;
    color: #b45309;
}
.chip-pin {
    background: #faf2d9;
    color: #a16207;
}
.hover-actions {
    position: absolute;
    top: 50px;
    right: 12px;
    display: flex;
    gap: 24px;
    padding: 14px;
    border: 2px solid #e8eaed;
    border-radius: 30px;
    background: rgba(252, 252, 253, 0.88);
    box-shadow: 0 8px 16px rgba(15, 23, 42, 0.07);
    color: #6b7280;
}

/* Window */
.window {
    display: flex;
    min-width: 0;
    overflow: hidden;
}
.conversation {
    display: flex;
    flex: 1;
    flex-direction: column;
    min-width: 0;
    background: rgba(255, 255, 255, 0.5);
}
.conv-head {
    display: flex;
    align-items: center;
    flex: none;
    height: 122px;
    padding: 0 34px 0 24px;
    border-bottom: 2px solid #eef0f2;
    background: #fff;
}
.ai-switch {
    display: flex;
    align-items: center;
    width: 198px;
    height: 68px;
    margin-left: 46px;
    padding: 0 24px 0 20px;
    border: 2px solid #efefef;
    border-radius: 34px;
    background: #f3f3f3;
}
.ai-switch span {
    flex: 1;
    padding-left: 20px;
    font-size: 23px;
    font-weight: 600;
    line-height: 34px;
    text-align: center;
    color: #374151;
}
.toggle {
    appearance: none;
    flex: none;
    width: 72px;
    height: 40px;
    margin: 0;
    padding: 4px;
    border-radius: 20px;
    background: #d1d5db;
    cursor: pointer;
}
.toggle::before {
    content: "";
    display: block;
    width: 32px;
    height: 32px;
    border-radius: 50%;
    background: #fff;
    box-shadow: 0 2px 4px rgba(0, 0, 0, 0.2);
}
.toggle:checked {
    background: #25d366;
}
.toggle:checked::before {
    margin-left: auto;
}
.toggle-small {
    width: 46px;
    height: 32px;
}
.toggle-small::before {
    width: 24px;
    height: 24px;
}
.conv-tools {
    display: flex;
    flex: 1;
    gap: 25px;
    padding-left: 22px;
    color: #6b7280;
}
.tool {
    display: flex;
    align-items: center;
    justify-content: center;
    width: 52px;
    height: 72px;
    border-radius: 14px;
}
.tool-on {
    background: #e0f8e8;
    color: #25d366;
}
.tool-more {
    margin-left: auto;
}
.banner {
    display: flex;
    align-items: center;
    justify-content: space-between;
    flex: none;
    height: 70px;
    padding: 0 32px;
    border-bottom: 2px solid #fcdcae;
    background: #fdf2e4;
    font-size: 24px;
    font-weight: 600;
    white-space: nowrap;
    color: #b45309;
}
.banner a {
    font-weight: 700;
    text-decoration: underline;
    text-underline-offset: 4px;
}
.messages {
    display: flex;
    flex: 1;
    flex-direction: column;
    justify-content: flex-end;
    min-height: 0;
    padding: 0 32px 24px;
    overflow: hidden;
}
.msg {
    flex: none;
    width: 68%;
    padding: 17px 24px 26px;
    border: 2px solid #e8e9ec;
    border-radius: 32px;
    font-size: 27px;
    line-height: 37px;
}
.in {
    margin-top: 56px;
    border-bottom-left-radius: 10px;
    background: linear-gradient(#fff, #fafafc);
    box-shadow: 0 8px 20px rgba(15, 23, 42, 0.05);
    color: #111827;
}
.out {
    align-self: flex-end;
    border-color: #8fdcae;
    border-bottom-right-radius: 10px;
    background: linear-gradient(#c9f7dc, #a2edc1);
    box-shadow: 0 8px 20px rgba(37, 211, 102, 0.15), inset 0 2px 0 rgba(255, 255, 255, 0.6);
    color: #10402a;
}
/* Scrolled under the banner */
.continued {
    border-top-left-radius: 0;
    border-top-right-radius: 0;
}
.meta {
    display: flex;
    align-items: center;
    justify-content: flex-end;
    gap: 8px;
    height: 34px;
    margin-top: 13px;
    font-size: 22px;
    font-variant-numeric: tabular-nums;
    color: #6b7280;
}
.out .meta {
    color: #4b8a66;
}
.meta .solid {
    color: #6fe09a;
}
.meta .sent {
    stroke-width: 2.5;
    color: #94a3b8;
}
.ai-label {
    display: flex;
    align-items: center;
    align-self: flex-end;
    gap: 9px;
    height: 32px;
    margin: 56px 5px 8px;
    font-size: 21px;
    font-weight: 700;
    color: #25d366;
}
.day {
    align-self: center;
    height: 50px;
    margin-top: 24px;
    padding: 0 24px;
    border: 2px solid #e8e9ec;
    border-radius: 25px;
    background: #fdfdfd;
    box-shadow: 0 6px 14px rgba(15, 23, 42, 0.05);
    font-size: 21px;
    font-weight: 600;
    line-height: 46px;
    letter-spacing: 1px;
    color: #4b5563;
}
.strip {
    display: flex;
    align-items: center;
    flex: none;
    height: 62px;
    padding: 0 44px 0 32px;
    border-top: 2px solid #eceff1;
    border-bottom: 2px solid #eceff1;
    background: #f6fafb;
    font-size: 23px;
    font-weight: 600;
    color: #b45309;
}
.strip-dot {
    width: 16px;
    height: 16px;
    margin-right: 19px;
    border-radius: 50%;
    background: #f59e0b;
}
.strip span {
    margin-left: 11px;
}
.schedule {
    display: flex;
    align-items: center;
    gap: 11px;
    margin-left: auto;
    color: #15803d;
}
.composer {
    flex: none;
    padding: 24px 32px;
    background: #fff;
}
.closed-box {
    display: flex;
    align-items: center;
    gap: 18px;
    min-height: 156px;
    padding: 20px 24px 20px 26px;
    border: 2px solid #fbdfae;
    border-radius: 28px;
    background: linear-gradient(#fdf1df, #fff8ee);
    color: #b45309;
}
.closed-box p {
    flex: 1;
    font-size: 25px;
    line-height: 37px;
}
.send {
    flex: none;
    height: 60px;
    padding: 0 26px;
    border-radius: 16px;
    background: linear-gradient(#2de27a, #1db954);
    box-shadow: 0 6px 14px rgba(37, 211, 102, 0.25), inset 0 2px 0 rgba(255, 255, 255, 0.3), inset 0 -2px 0 #1aa34a;
    font-size: 23px;
    font-weight: 600;
    color: #fff;
}

/* Contact details */
.details {
    flex: none;
    width: 640px;
    border-left: 2px solid #ebedf0;
    background: #fff;
    overflow: hidden;
}
.block {
    padding: 23px 30px 20px 32px;
    border-bottom: 2px solid #eff0f2;
}
.block-agent {
    padding-top: 0;
}
.block header {
    display: flex;
    align-items: center;
    height: 34px;
    padding-left: 2px;
    color: #25d366;
}
.block h4 {
    margin: 0 16px 0 14px;
    font-size: 22px;
    font-weight: 600;
    letter-spacing: 1px;
    color: #6b7280;
}
.fold {
    color: #6b7280;
}
.link-btn {
    margin-left: auto;
    font-size: 22px;
    font-weight: 600;
}
.empty {
    font-size: 24px;
    font-style: italic;
    line-height: 48px;
    color: #9ca3af;
}
.block header + .empty {
    margin-top: 20px;
}
.tags {
    display: flex;
    gap: 12px;
    margin: 15px 0 4px;
}
.tag, .tag-add {
    display: flex;
    align-items: center;
    gap: 10px;
    height: 38px;
    padding: 0 9px 0 12px;
    border: 2px solid #f9bcbc;
    border-radius: 8px;
    background: #fde4e4;
    font-size: 20px;
    font-weight: 600;
    color: #dc2626;
}
.tag .icon {
    color: #f06b6b;
}
.tag-add {
    gap: 11px;
    padding: 0 12px 0 14px;
    border: 2px dashed #d1d5db;
    background: none;
    font-weight: 500;
    color: #6b7280;
}
.deal {
    display: flex;
    align-items: center;
    gap: 16px;
    height: 104px;
    margin-top: 11px;
    padding: 0 16px;
    color: #111827;
}
.deal-dot {
    flex: none;
    width: 16px;
    height: 16px;
    border-radius: 50%;
    background: #94a3b8;
}
.deal-info {
    flex: 1;
    min-width: 0;
    padding-top: 2px;
}
.deal-info strong, .deal-info span {
    display: block;
    overflow: hidden;
    font-weight: 600;
    line-height: 37px;
    white-space: nowrap;
    text-overflow: ellipsis;
}
.deal-info span {
    font-size: 22px;
    font-weight: 400;
    color: #6b7280;
}
.deal b {
    margin-left: 8px;
    font-size: 24px;
}
.block-tasks {
    padding-bottom: 16px;
}
.block-tasks header {
    margin-bottom: 17px;
}
.task {
    display: flex;
    gap: 18px;
    margin-bottom: 8px;
    padding: 12px 18px;
    border-radius: 16px;
    line-height: 36px;
}
.task > .icon {
    margin-top: 7px;
    color: #9ca3af;
}
.task .open-mark {
    margin: 11px 0 0 auto;
}
.task em {
    display: block;
    font-size: 22px;
    font-style: normal;
    font-weight: 600;
    color: #dc2626;
}
.task-hover {
    background: #f7f7f8;
}
.activity {
    display: flex;
    gap: 18px;
    padding: 11px 2px 4px;
    font-size: 24px;
    line-height: 40px;
    color: #374151;
}
.activity .icon {
    margin-top: 10px;
    color: #16a34a;
}
.activity time {
    display: block;
    font-size: 21px;
    line-height: 28px;
    color: #9ca3af;
}
.prefs {
    padding: 24px 30px 0 32px;
}
.prefs h5 {
    margin-bottom: 15px;
    font-size: 20px;
    font-weight: 600;
    line-height: 30px;
    letter-spacing: 1px;
    color: #6b7280;
}
.prefs label {
    display: flex;
    align-items: center;
    justify-content: space-between;
    height: 64px;
    color: #374151;
}
.float-btn {
    position: fixed;
    right: 49px;
    bottom: 38px;
    display: flex;
    align-items: center;
    justify-content: center;
    width: 66px;
    height: 66px;
    border: 2px solid #eff0f2;
    border-radius: 50%;
    background: rgba(250, 250, 252, 0.6);
    box-shadow: 0 6px 16px rgba(15, 23, 42, 0.04);
    color: #9fa6b2;
}
```
